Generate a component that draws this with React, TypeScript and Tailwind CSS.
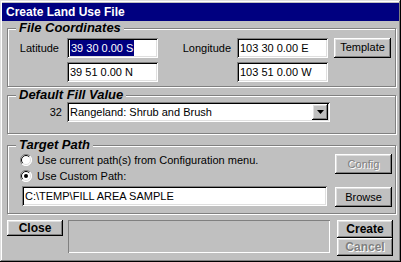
import React from 'react';

const raised =
  'shadow-[inset_-1px_-1px_0_#000,inset_1px_1px_0_#fff,inset_-2px_-2px_0_#808080,inset_2px_2px_0_#dfdfdf]';
const sunken =
  'shadow-[inset_1px_1px_0_#808080,inset_-1px_-1px_0_#fff,inset_2px_2px_0_#000,inset_-2px_-2px_0_#dfdfdf]';
const shallow = 'shadow-[inset_1px_1px_0_#808080,inset_-1px_-1px_0_#fff]';

const Button = ({ label, className = '', bold = false, disabled = false }: { label: string; className?: string; bold?: boolean; disabled?: boolean }) => (
  <div
    className={`flex items-center justify-center bg-[#c0c0c0] ${raised} ${bold ? 'font-bold text-[12px]' : 'text-[11px]'} ${
      disabled ? 'text-[#808080] [text-shadow:1px_1px_0_#fff]' : 'text-black'
    } ${className}`}
  >
    {label}
  </div>
);

const Field = ({ children, className = '' }: { children: React.ReactNode; className?: string }) => (
  <div className={`h-[20px] bg-white ${sunken} flex items-center pl-[3px] text-[11px] text-black ${className}`}>{children}</div>
);

const Group = ({ title, className = '', children }: { title: string; className?: string; children: React.ReactNode }) => (
  <fieldset className={`border border-[#808080] shadow-[1px_1px_0_#fff,inset_1px_1px_0_#fff] ${className}`}>
    <legend className="ml-[8px] px-[3px] bg-[#c0c0c0] text-[13px] leading-[14px] font-bold italic text-black">{title}</legend>
    {children}
  </fieldset>
);

const Radio = ({ checked }: { checked: boolean }) => (
  <svg width="12" height="12" viewBox="0 0 12 12" className="shrink-0">
    <circle cx="6" cy="6" r="5.5" fill="#fff" />
    <path d="M10 2 A5.5 5.5 0 0 0 2 10" fill="none" stroke="#808080" strokeWidth="1" />
    <path d="M9.2 2.8 A4.5 4.5 0 0 0 2.8 9.2" fill="none" stroke="#000" strokeWidth="1" />
    <path d="M2 10 A5.5 5.5 0 0 0 10 2" fill="none" stroke="#fff" strokeWidth="1" />
    <path d="M2.8 9.2 A4.5 4.5 0 0 0 9.2 2.8" fill="none" stroke="#dfdfdf" strokeWidth="1" />
    {checked && <circle cx="6" cy="6" r="2" fill="#000" />}
  </svg>
);

export default function App() {
  return (
    <div className="w-[401px] h-[262px] bg-[#c0c0c0] shadow-[inset_-1px_-1px_0_#000,inset_1px_1px_0_#dfdfdf,inset_-2px_-2px_0_#808080,inset_2px_2px_0_#fff] px-[2px] pt-[3px] flex flex-col font-['Liberation_Sans',Arial,sans-serif] text-black overflow-hidden">
      <div className="h-[18px] bg-[#000080] text-white font-bold text-[12px] leading-[18px] pl-[4px]">Create Land Use File</div>

      <div className="pl-[5px] pr-[3px] flex flex-col">
        <Group title="File Coordinates" className="h-[66px]">
          <div className="flex items-center mt-[3px] text-[11px]">
            <span className="w-[59px] text-right pr-[8px]">Latitude</span>
            <Field className="w-[91px]">
              <span className="bg-[#000080] text-white px-[1px]">39 30 0.00 S</span>
            </Field>
            <span className="w-[79px] text-right pr-[6px]">Longitude</span>
            <Field className="w-[91px]">103 30 0.00 E</Field>
            <Button label="Template" className="w-[57px] h-[20px] ml-[6px] -mt-[1px]" />
          </div>
          <div className="flex items-center mt-[4px] text-[11px]">
            <Field className="w-[91px] ml-[59px]">39 51 0.00 N</Field>
            <Field className="w-[91px] ml-[79px]">103 51 0.00 W</Field>
          </div>
        </Group>

        <Group title="Default Fill Value" className="h-[46px] mt-[1px]">
          <div className="flex items-center text-[11px]">
            <span className="w-[59px] text-right pr-[5px]">32</span>
            <div className={`w-[263px] h-[20px] bg-white ${sunken} flex items-center pl-[3px] pr-[2px]`}>
              <span className="flex-1">Rangeland: Shrub and Brush</span>
              <div className={`w-[16px] h-[16px] bg-[#c0c0c0] ${raised} flex items-center justify-center`}>
                <svg width="7" height="4" viewBox="0 0 7 4">
                  <path d="M0 0 H7 L3.5 4 Z" fill="#000" />
                </svg>
              </div>
            </div>
          </div>
        </Group>

        <Group title="Target Path" className="h-[76px] mt-[4px]">
          <div className="flex text-[11px]">
            <div className="flex flex-col w-[327px]">
              <div className="flex items-center h-[16px] pl-[12px] gap-[5px]">
                <Radio checked={false} />
                <span>Use current path(s) from Configuration menu.</span>
              </div>
              <div className="flex items-center h-[16px] pl-[12px] gap-[5px]">
                <Radio checked={true} />
                <span>Use Custom Path:</span>
              </div>
              <Field className="w-[305px] ml-[14px] mt-[2px] h-[19px]">C:\TEMP\FILL AREA SAMPLE</Field>
            </div>
            <div className="flex flex-col">
              <Button label="Config" disabled className="w-[57px] h-[20px] mt-[2px]" />
              <Button label="Browse" className="w-[57px] h-[20px] mt-[13px]" />
            </div>
          </div>
        </Group>
      </div>

      <div className="flex mt-[6px] pl-[5px]">
        <Button label="Close" bold className="w-[56px] h-[16px]" />
        <div className={`w-[262px] h-[33px] ml-[5px] ${shallow}`} />
        <div className="flex flex-col ml-[7px]">
          <Button label="Create" bold className="w-[56px] h-[18px]" />
          <Button label="Cancel" bold disabled className="w-[56px] h-[18px]" />
        </div>
      </div>
    </div>
  );
}
